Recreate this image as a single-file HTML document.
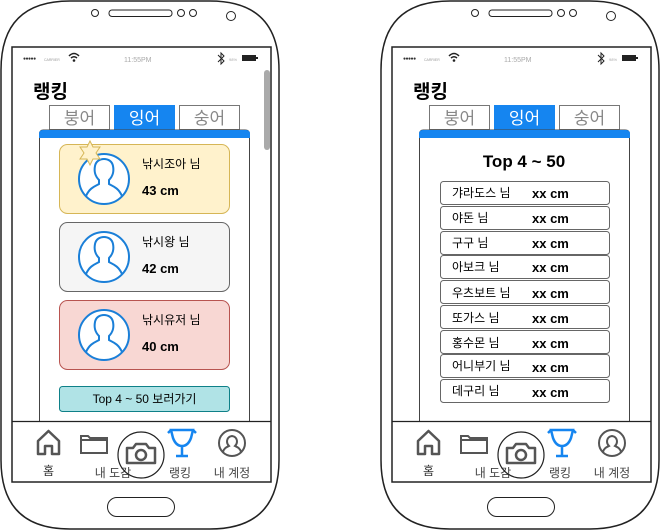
<!DOCTYPE html>
<html><head><meta charset="utf-8"><style>
html,body{margin:0;padding:0;background:#fff;width:661px;height:531px;overflow:hidden}
svg{display:block}
text{font-family:"Liberation Sans","Noto Sans CJK KR",sans-serif}
</style></head><body>
<svg width="661" height="531" viewBox="0 0 661 531" xmlns="http://www.w3.org/2000/svg">
<defs>
<g id="avatar">
<circle cx="0" cy="0" r="25" fill="#fff" stroke="#1a7fd8" stroke-width="2"/>
<path d="M-18,17 C-14,8 -8,7 -5,5 L-5,1 C-9,-3 -10,-8 -9,-13 C-8,-18 -4,-20 0,-20 C4,-20 8,-18 9,-13 C10,-8 9,-3 5,1 L5,5 C8,7 14,8 18,17" fill="none" stroke="#1a7fd8" stroke-width="2"/>
</g>
<g id="phone">
<path d="M70,1 H210 Q279,1 279,70 V460 Q279,529 210,529 H70 Q1,529 1,460 V70 Q1,1 70,1 Z" fill="#fff" stroke="#222" stroke-width="1.5"/>
<circle cx="95" cy="13" r="3.5" fill="none" stroke="#222"/>
<rect x="109" y="10" width="63" height="6.5" rx="3" fill="none" stroke="#222"/>
<circle cx="181" cy="13" r="3.5" fill="none" stroke="#222"/>
<circle cx="193" cy="13" r="3.5" fill="none" stroke="#222"/>
<circle cx="231" cy="16" r="4.5" fill="none" stroke="#222"/>
<rect x="12" y="47" width="259" height="435" fill="#fff" stroke="#222" stroke-width="1.5"/>
<text x="23" y="60" font-size="5" fill="#333" letter-spacing="-0.5">●●●●●</text>
<text x="44" y="61" font-size="3.5" fill="#999">CARRIER</text>
<path d="M69,56 Q74,51 79,56 M71,58 Q74,55.5 77,58" fill="none" stroke="#222" stroke-width="1.5"/>
<circle cx="74" cy="60.5" r="1.3" fill="#222"/>
<text x="124" y="62" font-size="7" fill="#aaa">11:55PM</text>
<path d="M218,55 L224,61 L221,64 V53 L224,56 L218,62" fill="none" stroke="#222" stroke-width="1"/>
<text x="229" y="61" font-size="4" fill="#aaa">98%</text>
<rect x="242" y="55" width="14" height="6" fill="#222"/><rect x="256" y="57" width="2" height="2" fill="#222"/>
<text x="33" y="98" font-size="19" font-weight="bold" fill="#000">랭킹</text>
<rect x="49.5" y="105.5" width="60" height="24" fill="#fff" stroke="#777"/>
<text x="79.5" y="124" font-size="17" fill="#888" text-anchor="middle">붕어</text>
<rect x="114" y="105" width="61" height="25" fill="#1585f0"/>
<text x="144.5" y="124" font-size="17" fill="#fff" text-anchor="middle">잉어</text>
<rect x="179.5" y="105.5" width="60" height="24" fill="#fff" stroke="#777"/>
<text x="209.5" y="124" font-size="17" fill="#888" text-anchor="middle">숭어</text>
<path d="M39.5,421 V134 Q39.5,130 43.5,130 H245 Q249.5,130 249.5,134 V421" fill="#fff" stroke="#444"/>
<path d="M39,138 V134 Q39,130 43,130 H246 Q250,130 250,134 V138 Z" fill="#1585f0"/>
<line x1="12" y1="421.5" x2="271" y2="421.5" stroke="#222" stroke-width="1.2"/>
<path d="M38,441 L48.5,431 L59,441 V454 H52 V446 H45 V454 H38 Z" fill="none" stroke="#555" stroke-width="2.5" stroke-linejoin="round"/>
<text x="48.5" y="475" font-size="12" fill="#333" text-anchor="middle">홈</text>
<path d="M81,436 H88 L90,438 H107 V453 H81 Z M81,440 H107" fill="none" stroke="#555" stroke-width="2"/>
<text x="113" y="477" font-size="12" fill="#444" text-anchor="middle">내 도감</text>
<circle cx="141" cy="455" r="23" fill="none" stroke="#222" stroke-width="1.2"/>
<path d="M127,448 H133 L136,444 H146 L149,448 H155 V463 H127 Z" fill="none" stroke="#555" stroke-width="2.5" stroke-linejoin="round"/>
<circle cx="141" cy="455" r="5" fill="none" stroke="#555" stroke-width="2.5"/>
<path d="M171,430 H193 L191,438 Q188,446 182,446 Q176,446 173,438 Z M171,430 L168,433 M193,430 L196,433 M182,446 V456 M176,456 H188" fill="none" stroke="#1585f0" stroke-width="2.5"/>
<text x="180" y="477" font-size="12" fill="#444" text-anchor="middle">랭킹</text>
<circle cx="232" cy="443" r="13" fill="none" stroke="#555" stroke-width="2"/>
<path d="M223,452 C224,448 227,447 229,446 C226,443 226,437 232,436 C238,437 238,443 235,446 C237,447 240,448 241,452" fill="none" stroke="#555" stroke-width="2"/>
<text x="232" y="477" font-size="12" fill="#444" text-anchor="middle">내 계정</text>
<rect x="107.5" y="497.5" width="67" height="19" rx="9.5" fill="none" stroke="#222"/>
</g>
</defs>

<use href="#phone"/>
<use href="#phone" x="380"/>

<rect x="264" y="70" width="6" height="80" rx="3" fill="#aaa"/>
<rect x="59.5" y="144.5" width="170" height="69" rx="8" fill="#fff2cc" stroke="#d6b656"/>
<use href="#avatar" x="104" y="179"/>
<path d="M90,141 L93,147 L100,147 L96,153 L100,159 L93,159 L90,165 L87,159 L80,159 L84,153 L80,147 L87,147 Z" fill="#fff2cc" stroke="#d6b656"/>
<text x="142" y="168" font-size="12" fill="#000">낚시조아 님</text>
<text x="142" y="195" font-size="13" font-weight="bold" fill="#000">43 cm</text>
<rect x="59.5" y="222.5" width="170" height="69" rx="8" fill="#f5f5f5" stroke="#666"/>
<use href="#avatar" x="104" y="257"/>
<text x="142" y="246" font-size="12" fill="#000">낚시왕 님</text>
<text x="142" y="273" font-size="13" font-weight="bold" fill="#000">42 cm</text>
<rect x="59.5" y="300.5" width="170" height="69" rx="8" fill="#f8d7d3" stroke="#b85450"/>
<use href="#avatar" x="104" y="335"/>
<text x="142" y="324" font-size="12" fill="#000">낚시유저 님</text>
<text x="142" y="351" font-size="13" font-weight="bold" fill="#000">40 cm</text>
<rect x="59.5" y="386.5" width="170" height="25" rx="3" fill="#b0e3e6" stroke="#0e8088"/>
<text x="144.5" y="403" font-size="12" fill="#000" text-anchor="middle">Top 4 ~ 50 보러가기</text>

<text x="524" y="167" font-size="17" font-weight="bold" fill="#000" text-anchor="middle">Top 4 ~ 50</text>
<g font-size="12">
<rect x="440.5" y="181.5" width="169" height="23" rx="3" fill="#fff" stroke="#666"/><text x="452" y="197">갸라도스 님</text><text x="532" y="198" font-size="13" font-weight="bold">xx cm</text>
<rect x="440.5" y="206.5" width="169" height="23" rx="3" fill="#fff" stroke="#666"/><text x="452" y="222">야돈 님</text><text x="532" y="223" font-size="13" font-weight="bold">xx cm</text>
<rect x="440.5" y="231.5" width="169" height="23" rx="3" fill="#fff" stroke="#666"/><text x="452" y="247">구구 님</text><text x="532" y="248" font-size="13" font-weight="bold">xx cm</text>
<rect x="440.5" y="255.5" width="169" height="23" rx="3" fill="#fff" stroke="#666"/><text x="452" y="271">아보크 님</text><text x="532" y="272" font-size="13" font-weight="bold">xx cm</text>
<rect x="440.5" y="280.5" width="169" height="23" rx="3" fill="#fff" stroke="#666"/><text x="452" y="297">우츠보트 님</text><text x="532" y="298" font-size="13" font-weight="bold">xx cm</text>
<rect x="440.5" y="305.5" width="169" height="23" rx="3" fill="#fff" stroke="#666"/><text x="452" y="322">또가스 님</text><text x="532" y="323" font-size="13" font-weight="bold">xx cm</text>
<rect x="440.5" y="330.5" width="169" height="23" rx="3" fill="#fff" stroke="#666"/><text x="452" y="347">홍수몬 님</text><text x="532" y="348" font-size="13" font-weight="bold">xx cm</text>
<rect x="440.5" y="354.5" width="169" height="23" rx="3" fill="#fff" stroke="#666"/><text x="452" y="370">어니부기 님</text><text x="532" y="372" font-size="13" font-weight="bold">xx cm</text>
<rect x="440.5" y="379.5" width="169" height="23" rx="3" fill="#fff" stroke="#666"/><text x="452" y="395">데구리 님</text><text x="532" y="397" font-size="13" font-weight="bold">xx cm</text>
</g>
</svg>
</body></html>
